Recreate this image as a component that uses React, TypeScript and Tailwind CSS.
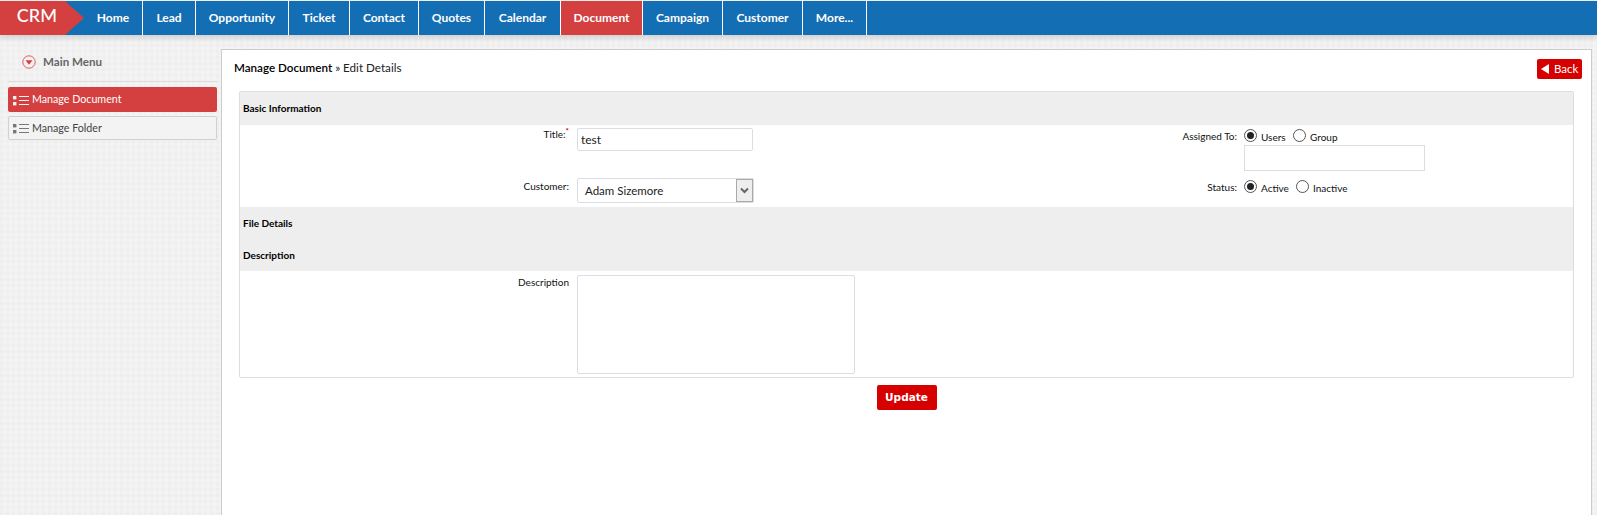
import React from "react";

const navItems = [
  { label: "Home", width: "w-[59px]" },
  { label: "Lead", width: "w-[53px]" },
  { label: "Opportunity", width: "w-[93px]" },
  { label: "Ticket", width: "w-[61px]" },
  { label: "Contact", width: "w-[69px]" },
  { label: "Quotes", width: "w-[66px]" },
  { label: "Calendar", width: "w-[76px]" },
  { label: "Document", width: "w-[82px]", active: true },
  { label: "Campaign", width: "w-[80px]" },
  { label: "Customer", width: "w-[80px]" },
  { label: "More...", width: "w-[64px]" },
];

function ListIcon({ color }: { color: string }) {
  return (
    <svg width="19" height="14" viewBox="0 0 19 14" className="shrink-0">
      <rect x="0" y="3" width="3.4" height="3.4" fill={color} />
      <rect x="0" y="9" width="3.4" height="3.4" fill={color} />
      <rect x="6" y="3" width="10" height="1" fill={color} />
      <rect x="6" y="7" width="10" height="1" fill={color} />
      <rect x="6" y="11" width="10" height="1" fill={color} />
    </svg>
  );
}

function Radio({ checked }: { checked?: boolean }) {
  return (
    <span className="flex h-[13px] w-[13px] shrink-0 items-center justify-center rounded-full border border-[#555] bg-white">
      {checked && <span className="h-[7px] w-[7px] rounded-full bg-[#222]" />}
    </span>
  );
}

function SectionHead({ title, className }: { title: string; className: string }) {
  return (
    <div className={`flex items-center bg-[#eeeeee] pl-[3px] text-[10px] font-bold text-black ${className}`}>
      {title}
    </div>
  );
}

export default function App() {
  return (
    <div
      className="flex h-[515px] w-[1597px] flex-col overflow-hidden bg-[#f2f2f2] bg-[repeating-linear-gradient(90deg,rgba(0,0,0,0.008)_0px,rgba(0,0,0,0.008)_3px,rgba(255,255,255,0.07)_3px,rgba(255,255,255,0.07)_6px),repeating-linear-gradient(0deg,rgba(0,0,0,0.008)_0px,rgba(0,0,0,0.008)_3px,rgba(255,255,255,0.07)_3px,rgba(255,255,255,0.07)_6px)] text-[#111]"
      style={{ fontFamily: "Lato, 'Noto Sans', sans-serif" }}
    >
      {/* Top nav */}
      <div className="mt-[1px] flex h-[34px] shrink-0 bg-[#146eb4] shadow-[0_3px_5px_rgba(0,0,0,0.14)]">
        <div className="flex h-[34px] w-[84px] shrink-0 items-start">
          <div className="flex h-[34px] w-[65px] items-center justify-end bg-[#d43f3f] pb-[5px] pr-[8px] text-[18px] font-medium text-white">
            CRM
          </div>
          <div className="h-0 w-0 border-y-[17px] border-l-[19px] border-y-transparent border-l-[#d43f3f]" />
        </div>
        {navItems.map((item) => (
          <div
            key={item.label}
            className={`flex h-[34px] items-center justify-center border-r border-white pb-[1px] text-[12px] font-bold text-white ${item.width} ${
              item.active ? "bg-[#d43f3f]" : ""
            }`}
          >
            {item.label}
          </div>
        ))}
      </div>

      <div className="flex min-h-0 flex-1 pl-[8px] pt-[14px]">
        {/* Sidebar */}
        <div className="w-[209px] shrink-0">
          <div className="flex h-[33px] items-center border-b border-[#dddddd] pb-[10px] pl-[14px] pt-[3px] text-[11.6px] font-bold text-[#666]">
            <svg width="14" height="14" viewBox="0 0 14 14" className="mr-[7px]">
              <circle cx="7" cy="7" r="6.2" fill="none" stroke="#d9605f" strokeWidth="1" />
              <path d="M3.5 5.2 H10.5 L7 9.8 Z" fill="#d43f3f" />
            </svg>
            Main Menu
          </div>
          <div className="mt-[5px] flex h-[25px] items-center rounded-[2px] bg-[#d43f3f] pl-[5px] text-[10.7px] text-white">
            <ListIcon color="#f4f4f4" />
            Manage Document
          </div>
          <div className="mt-[4px] flex h-[24px] items-center rounded-[2px] border border-[#d0d0d0] bg-[#f3f3f3] pl-[4px] text-[10.7px] text-[#444]">
            <ListIcon color="#777777" />
            Manage Folder
          </div>
        </div>

        {/* Main panel */}
        <div className="ml-[4px] mr-[5px] min-w-0 flex-1 border border-b-0 border-[#cccccc] bg-white px-[17px]">
          <div className="flex h-[41px] items-start justify-between pt-[9px]">
            <div className="-ml-[5px] text-[11.65px]">
              <span className="font-semibold text-black">Manage Document</span>
              <span className="text-[#222]"> » Edit Details</span>
            </div>
            <div className="-mr-[8px] flex h-[20px] w-[45px] items-center gap-[5px] rounded-[2px] bg-[#d60000] pl-[4px] text-[11.5px] text-white">
              <span className="h-0 w-0 border-y-[5.5px] border-r-[8px] border-y-transparent border-r-white" />
              Back
            </div>
          </div>

          <div className="h-[287px] rounded-[2px] border border-[#dddddd]">
            <SectionHead title="Basic Information" className="h-[33px]" />

            {/* Basic information form */}
            <div className="grid h-[82px] grid-cols-[337px_176px_1fr] text-[10px]">
              <div className="pr-[8px] pt-[2px] text-right">
                Title:<sup className="text-[8px] font-bold text-[#cc0000]">*</sup>
                <div className="pt-[37px]">Customer:</div>
              </div>
              <div className="pt-[3px]">
                <div className="flex h-[23px] items-center rounded-[2px] border border-[#d8dde6] pl-[3px] text-[12px] text-[#222]">
                  test
                </div>
                <div className="mt-[27px] flex h-[25px] w-[177px] items-center justify-between rounded-[2px] border border-[#d8dde6] pl-[7px] text-[11.5px] text-[#222]">
                  Adam Sizemore
                  <span className="flex h-full w-[17px] items-center justify-center border border-[#aaaaaa] bg-[#eeeeee]">
                    <svg width="9" height="7" viewBox="0 0 9 7">
                      <path d="M1 1.5 L4.5 5 L8 1.5" fill="none" stroke="#666" strokeWidth="2" />
                    </svg>
                  </span>
                </div>
              </div>
              <div className="grid grid-cols-[491px_1fr] grid-rows-[53px_1fr]">
                <div className="pr-[7px] pt-[4px] text-right">Assigned To:</div>
                <div className="pt-[2px]">
                  <div className="flex h-[16px] items-center">
                    <Radio checked />
                    <span className="ml-[4px] mt-[4px] w-[32px]">Users</span>
                    <Radio />
                    <span className="ml-[4px] mt-[4px]">Group</span>
                  </div>
                  <div className="mt-[2px] h-[26px] w-[181px] border border-[#d8dde6]" />
                </div>
                <div className="pr-[7px] pt-[2px] text-right">Status:</div>
                <div className="flex h-[16px] items-center pt-[1px]">
                  <Radio checked />
                  <span className="ml-[4px] mt-[3px] w-[35px]">Active</span>
                  <Radio />
                  <span className="ml-[4px] mt-[3px]">Inactive</span>
                </div>
              </div>
            </div>

            <SectionHead title="File Details" className="h-[32px] pt-[1px]" />
            <SectionHead title="Description" className="h-[32px] pt-[1px]" />

            <div className="flex">
              <div className="w-[337px] pr-[8px] pt-[4px] text-right text-[10px]">Description</div>
              <div className="mt-[4px] h-[99px] w-[278px] rounded-[2px] border border-[#d8dde6]" />
            </div>
          </div>

          <div className="flex justify-center pt-[7px]">
            <div
              className="flex h-[25px] w-[60px] items-center justify-center rounded-[2px] bg-[#d60000] text-[10.5px] font-bold text-white"
              style={{ fontFamily: "'DejaVu Sans', sans-serif" }}
            >
              Update
            </div>
          </div>
        </div>
      </div>
    </div>
  );
}
